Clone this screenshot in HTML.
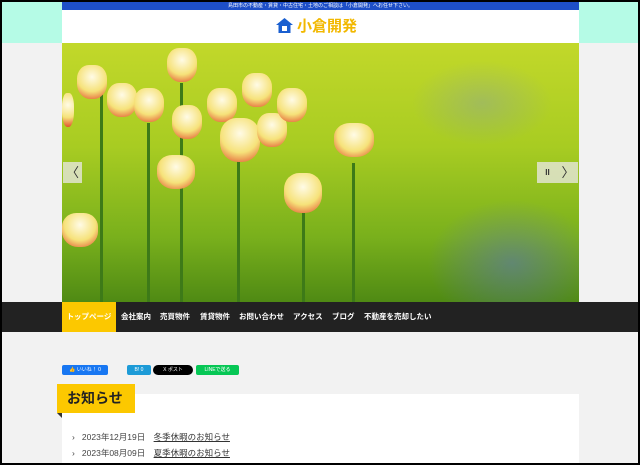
<!DOCTYPE html>
<html><head><meta charset="utf-8"><style>
*{margin:0;padding:0;box-sizing:border-box}
body{width:640px;height:465px;overflow:hidden;background:#f2f2f2;font-family:"Liberation Sans","Noto Sans CJK JP",sans-serif;position:relative}
.frame{position:absolute;inset:0;border:2px solid #000;z-index:10;pointer-events:none}
.mint{position:absolute;left:0;top:0;width:640px;height:43px;background:#b5fbe6}
.top{position:absolute;left:62px;top:2px;width:517px;height:8px;background:#1e4fc8;color:#fff;font-size:5px;text-align:center;line-height:8px}
.hdr{position:absolute;left:62px;top:10px;width:517px;height:33px;background:#fff}
.logo{position:absolute;left:276px;top:15px;font-size:15px;font-weight:bold;color:#f2b800;display:flex;align-items:center;gap:4px}
.img{position:absolute;left:62px;top:43px;width:517px;height:259px;overflow:hidden;
background:
radial-gradient(ellipse 120px 90px at 450px 220px,rgba(90,110,200,.5),transparent 70%),
radial-gradient(ellipse 100px 60px at 420px 60px,rgba(120,140,210,.3),transparent 70%),
linear-gradient(180deg,#c2d82a 0%,#a8cc22 40%,#79b01c 75%,#4f8a14 100%)}
.t{position:absolute;width:30px;height:34px;border-radius:40% 40% 45% 45%;background:radial-gradient(circle at 50% 35%,#fffbe6,#f6e27a 55%,#e0482a 100%)}
.s{position:absolute;width:3px;background:#3d7a18}
.arr{position:absolute;top:162px;height:21px;background:rgba(230,230,220,.8);color:#333;font-size:13px;text-align:center;line-height:21px}
.nav{position:absolute;left:2px;top:302px;width:636px;height:30px;background:#222}
.nav span{position:absolute;top:0;height:30px;line-height:30px;color:#fff;font-size:7.5px;font-weight:bold}
.act{background:#fcc800;left:60px!important;width:54px;text-align:center;color:#fff}
.sh{position:absolute;top:365px;height:10px;border-radius:2px;font-size:5px;color:#fff;line-height:10px;text-align:center}
.card{position:absolute;left:62px;top:394px;width:517px;height:71px;background:#fff}
.ttl{position:absolute;left:57px;top:384px;width:78px;height:29px;background:#fcc800;font-size:14px;font-weight:bold;color:#222;line-height:29px;padding-left:10px}
.li{position:absolute;left:72px;font-size:8.5px;color:#444}
.li u{color:#333;margin-left:6px}
</style></head><body>
<div class="mint"></div>
<div class="top">島田市の不動産・賃貸・中古住宅・土地のご相談は「小倉開発」へお任せ下さい。</div>
<div class="hdr"></div>
<div class="logo"><svg width="17" height="15" viewBox="0 0 17 15"><path d="M8.5 0L0 7h2.5v8h12V7H17z" fill="#1a5fd0"/><rect x="6" y="8" width="5" height="5" fill="#fff"/></svg>小倉開発</div>
<div class="img">
<div class="s" style="left:38px;top:50px;height:210px"></div><div class="s" style="left:85px;top:80px;height:180px"></div>
<div class="s" style="left:118px;top:40px;height:220px"></div><div class="s" style="left:175px;top:110px;height:150px"></div>
<div class="s" style="left:240px;top:170px;height:90px"></div><div class="s" style="left:290px;top:120px;height:140px"></div>
<div class="t" style="left:15px;top:22px"></div><div class="t" style="left:45px;top:40px"></div>
<div class="t" style="left:72px;top:45px"></div><div class="t" style="left:105px;top:5px"></div>
<div class="t" style="left:110px;top:62px"></div><div class="t" style="left:145px;top:45px"></div>
<div class="t" style="left:158px;top:75px;width:40px;height:44px"></div><div class="t" style="left:195px;top:70px"></div>
<div class="t" style="left:215px;top:45px"></div><div class="t" style="left:95px;top:112px;width:38px"></div>
<div class="t" style="left:222px;top:130px;width:38px;height:40px"></div><div class="t" style="left:272px;top:80px;width:40px"></div>
<div class="t" style="left:0px;top:170px;width:36px"></div><div class="t" style="left:180px;top:30px"></div>
<div class="t" style="left:0px;top:50px;width:12px"></div>
</div>
<div class="arr" style="left:63px;width:19px">〈</div>
<div class="arr" style="left:537px;width:21px;font-size:8px;font-weight:bold">II</div>
<div class="arr" style="left:558px;width:20px">〉</div>
<div class="nav">
<span class="act">トップページ</span>
<span style="left:119px">会社案内</span><span style="left:158px">売買物件</span><span style="left:198px">賃貸物件</span>
<span style="left:237px">お問い合わせ</span><span style="left:291px">アクセス</span><span style="left:330px">ブログ</span><span style="left:362px">不動産を売却したい</span>
</div>
<div class="sh" style="left:62px;width:46px;background:#1877f2">👍 いいね！ 0</div>
<div class="sh" style="left:127px;width:24px;background:#1d9bd7">B! 0</div>
<div class="sh" style="left:153px;width:40px;background:#000;border-radius:5px">X ポスト</div>
<div class="sh" style="left:196px;width:43px;background:#06c755">LINEで送る</div>
<div class="card"></div>
<div class="ttl">お知らせ</div>
<div style="position:absolute;left:57px;top:413px;border-top:5px solid #333;border-left:5px solid transparent"></div>
<div class="li" style="top:431px">›&nbsp;&nbsp; 2023年12月19日 <u>冬季休暇のお知らせ</u></div>
<div class="li" style="top:447px">›&nbsp;&nbsp; 2023年08月09日 <u>夏季休暇のお知らせ</u></div>
<div class="frame"></div>
</body></html>
